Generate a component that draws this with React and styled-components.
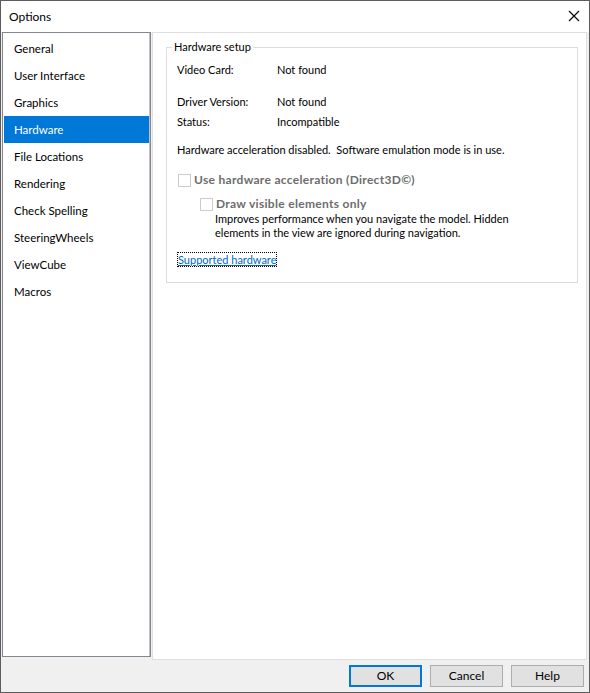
import React from "react";
import styled, { createGlobalStyle } from "styled-components";

const Global = createGlobalStyle`
  html, body { margin: 0; padding: 0; background: #ffffff; }
  * { box-sizing: border-box; }
`;

const Window = styled.div`
  width: 590px;
  height: 693px;
  border: 1px solid #5c5c5c;
  background: #f0f0f0;
  display: flex;
  flex-direction: column;
  font-family: Lato, "Liberation Sans", sans-serif;
  font-size: 12px;
  color: #000;
`;

const TitleBar = styled.div`
  height: 31px;
  flex: none;
  background: #ffffff;
  display: flex;
  align-items: center;
  justify-content: space-between;
  padding: 0 9px 1px 8px;
`;

const Title = styled.span`
  font-size: 12px;
`;

const Close = styled.svg`
  width: 12px;
  height: 12px;
  display: block;
`;

const Main = styled.div`
  flex: 1;
  display: flex;
  gap: 1px;
  padding: 0 2px 0 1px;
  min-height: 0;
`;

const Nav = styled.ul`
  list-style: none;
  margin: 0 0 3px 0;
  padding: 2px 0;
  width: 149px;
  flex: none;
  background: #ffffff;
  border: 1px solid #828790;
  box-shadow: inset -1px 0 0 #bfbfbf;
  font-size: 11.5px;
`;

const NavItem = styled.li`
  height: 27px;
  margin: 0 1px 0 1px;
  padding-left: 10px;
  display: flex;
  align-items: center;
  background: ${(p) => (p.$active ? "#0078d7" : "transparent")};
  color: ${(p) => (p.$active ? "#ffffff" : "#000000")};
`;

const Panel = styled.div`
  flex: 1;
  background: #ffffff;
  border: 1px solid #dfdfdf;
  padding: 7px 8px 0 13px;
  font-size: 11px;
`;

const Group = styled.fieldset`
  margin: 0;
  border: 1px solid #dcdcdc;
  padding: 2px 10px 15px 10px;
  height: 243px;
`;

const Legend = styled.legend`
  padding: 0 2px;
  margin-left: -5px;
  line-height: 14px;
`;

const InfoGrid = styled.div`
  display: grid;
  grid-template-columns: 100px auto;
  row-gap: 6px;
  line-height: 14px;
  margin-top: 7px;
`;

const Spacer = styled.div`
  grid-column: 1 / 3;
  height: 6px;
`;

const Note = styled.div`
  margin-top: 14px;
  line-height: 14px;
`;

const CheckRow = styled.div`
  display: flex;
  align-items: center;
  gap: 3px;
  margin-top: ${(p) => p.$mt}px;
  margin-left: ${(p) => p.$ml}px;
  font-weight: bold;
  font-size: 12px;
  letter-spacing: 0.3px;
  color: #6d6d6d;
  line-height: 14px;
`;

const Box = styled.span`
  width: 13px;
  height: 13px;
  border: 1px solid #cccccc;
  background: #ffffff;
  flex: none;
`;

const Desc = styled.div`
  margin-left: 38px;
  margin-top: 1px;
  line-height: 14px;
  width: 305px;
`;

const Link = styled.a`
  display: inline-block;
  margin-top: 13px;
  margin-left: 1px;
  color: #0066cc;
  text-decoration: underline;
  outline: 1px dotted #000;
  line-height: 13px;
  cursor: pointer;
`;

const Footer = styled.div`
  height: 32px;
  flex: none;
  display: flex;
  justify-content: flex-end;
  align-items: center;
  gap: 8px;
  padding: 0 5px 1px 0;
`;

const Button = styled.button`
  width: 73px;
  height: 22px;
  font-family: inherit;
  font-size: 12px;
  color: #000;
  background: #e1e1e1;
  border: ${(p) => (p.$primary ? "2px solid #0078d7" : "1px solid #adadad")};
  padding: 0;
`;

const navItems = [
  "General",
  "User Interface",
  "Graphics",
  "Hardware",
  "File Locations",
  "Rendering",
  "Check Spelling",
  "SteeringWheels",
  "ViewCube",
  "Macros",
];

export default function App() {
  return (
    <>
      <Global />
      <Window>
        <TitleBar>
          <Title>Options</Title>
          <Close viewBox="0 0 12 12">
            <path d="M1 1 L11 11 M11 1 L1 11" stroke="#000" strokeWidth="1.1" />
          </Close>
        </TitleBar>
        <Main>
          <Nav>
            {navItems.map((n) => (
              <NavItem key={n} $active={n === "Hardware"}>
                {n}
              </NavItem>
            ))}
          </Nav>
          <Panel>
            <Group>
              <Legend>Hardware setup</Legend>
              <InfoGrid>
                <span>Video Card:</span>
                <span>Not found</span>
                <Spacer />
                <span>Driver Version:</span>
                <span>Not found</span>
                <span>Status:</span>
                <span>Incompatible</span>
              </InfoGrid>
              <Note>Hardware acceleration disabled.&nbsp; Software emulation mode is in use.</Note>
              <CheckRow $mt={16} $ml={1}>
                <Box />
                Use hardware acceleration (Direct3D©)
              </CheckRow>
              <CheckRow $mt={10} $ml={23}>
                <Box />
                Draw visible elements only
              </CheckRow>
              <Desc>
                Improves performance when you navigate the model. Hidden elements in the view are
                ignored during navigation.
              </Desc>
              <Link>Supported hardware</Link>
            </Group>
          </Panel>
        </Main>
        <Footer>
          <Button $primary>OK</Button>
          <Button>Cancel</Button>
          <Button>Help</Button>
        </Footer>
      </Window>
    </>
  );
}
